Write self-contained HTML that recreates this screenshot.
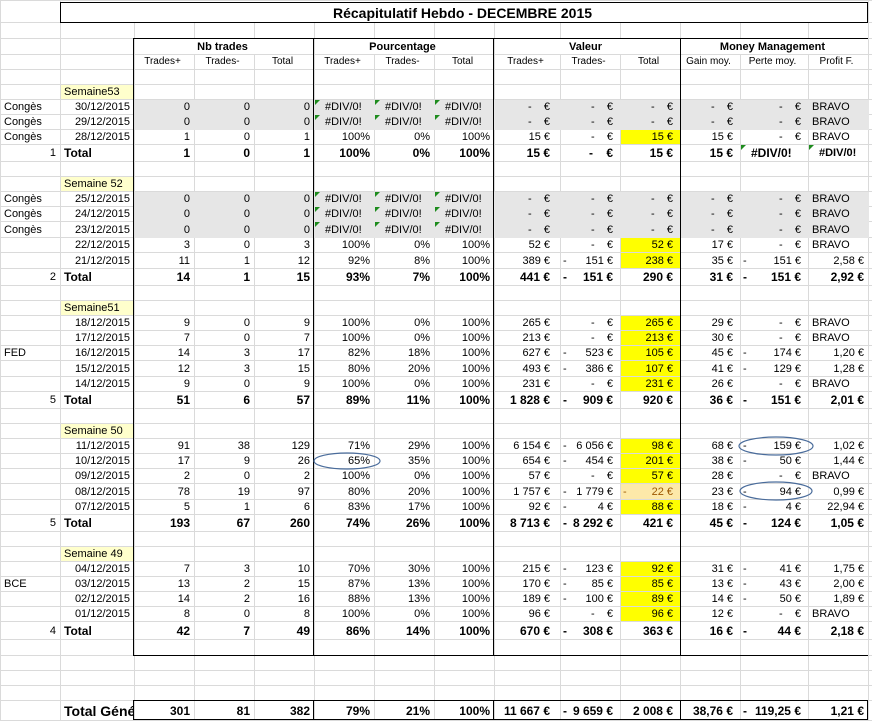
<!DOCTYPE html>
<html><head><meta charset="utf-8"><style>
body{margin:0;width:872px;height:720px;overflow:hidden;background:#fff;position:relative}
table{border-collapse:collapse;table-layout:fixed;position:absolute;left:0;top:0;width:872px}
td{border:1px solid #dadada;padding:0;text-align:right;font:11px "Liberation Sans",sans-serif;white-space:nowrap;overflow:hidden;line-height:12px;color:#000}
td::after{content:"";display:inline-block;width:4px}
td.e::after{width:7px}
td.v::after{width:10px}
td.l{text-align:left;text-indent:3px}
td.c{text-align:center}
td.g{background:#e6e6e6;border-color:#e6e6e6}
td.y{background:#ffff00}
td.o{background:#fde9a9;color:#9c5700}
td.s{background:#ffffcc;text-align:left;text-indent:3px}
td.b{font-weight:bold;font-size:12px}
td.h{font-weight:bold;text-align:center}
td.sh{text-align:center;font-size:10px}
td.d{text-align:left;text-indent:10px;position:relative}
td.d:before{content:"";position:absolute;left:0;top:0;border-top:5px solid #1e8c1e;border-right:5px solid transparent}
i{float:left;font-style:normal;padding-left:2px}
.ln{position:absolute;background:#000}
</style></head><body>
<table>
<colgroup><col style="width:60px"><col style="width:74px"><col style="width:60px"><col style="width:60px"><col style="width:60px"><col style="width:60px"><col style="width:60px"><col style="width:60px"><col style="width:66px"><col style="width:60px"><col style="width:60px"><col style="width:60px"><col style="width:68px"><col style="width:60px"><col style="width:4px"></colgroup>
<tr style="height:22px"><td></td><td colspan="13" class="c" style="font-weight:bold;font-size:14px;padding-top:2px">Récapitulatif Hebdo - DECEMBRE 2015</td><td></td></tr>
<tr style="height:16px"><td></td><td></td><td></td><td></td><td></td><td></td><td></td><td></td><td></td><td></td><td></td><td></td><td></td><td></td><td></td></tr>
<tr style="height:16px"><td></td><td></td><td colspan="3" class="h">Nb trades</td><td colspan="3" class="h">Pourcentage</td><td colspan="3" class="h">Valeur</td><td colspan="3" class="h">Money Management</td><td></td></tr>
<tr style="height:15px"><td></td><td></td><td class="sh">Trades+</td><td class="sh">Trades-</td><td class="sh">Total</td><td class="sh">Trades+</td><td class="sh">Trades-</td><td class="sh">Total</td><td class="sh">Trades+</td><td class="sh">Trades-</td><td class="sh">Total</td><td class="sh">Gain moy.</td><td class="sh">Perte moy.</td><td class="sh">Profit F.</td><td></td></tr>
<tr style="height:15px"><td></td><td></td><td></td><td></td><td></td><td></td><td></td><td></td><td></td><td></td><td></td><td></td><td></td><td></td><td></td></tr>
<tr style="height:15px"><td></td><td class="s">Semaine53</td><td></td><td></td><td></td><td></td><td></td><td></td><td></td><td></td><td></td><td></td><td></td><td></td><td></td></tr>
<tr style="height:15px"><td class="l">Congès</td><td>30/12/2015</td><td class="g">0</td><td class="g">0</td><td class="g">0</td><td class="g d">#DIV/0!</td><td class="g d">#DIV/0!</td><td class="g d">#DIV/0!</td><td class="g v">-&nbsp;&nbsp;&nbsp;&nbsp;€</td><td class="g e">-&nbsp;&nbsp;&nbsp;&nbsp;€</td><td class="g e">-&nbsp;&nbsp;&nbsp;&nbsp;€</td><td class="g e">-&nbsp;&nbsp;&nbsp;&nbsp;€</td><td class="g e">-&nbsp;&nbsp;&nbsp;&nbsp;€</td><td class="g l">BRAVO</td><td></td></tr>
<tr style="height:15px"><td class="l">Congès</td><td>29/12/2015</td><td class="g">0</td><td class="g">0</td><td class="g">0</td><td class="g d">#DIV/0!</td><td class="g d">#DIV/0!</td><td class="g d">#DIV/0!</td><td class="g v">-&nbsp;&nbsp;&nbsp;&nbsp;€</td><td class="g e">-&nbsp;&nbsp;&nbsp;&nbsp;€</td><td class="g e">-&nbsp;&nbsp;&nbsp;&nbsp;€</td><td class="g e">-&nbsp;&nbsp;&nbsp;&nbsp;€</td><td class="g e">-&nbsp;&nbsp;&nbsp;&nbsp;€</td><td class="g l">BRAVO</td><td></td></tr>
<tr style="height:15px"><td class="l">Congès</td><td>28/12/2015</td><td>1</td><td>0</td><td>1</td><td>100%</td><td>0%</td><td>100%</td><td class="v">15 €</td><td class="e">-&nbsp;&nbsp;&nbsp;&nbsp;€</td><td class="e y">15 €</td><td class="e">15 €</td><td class="e">-&nbsp;&nbsp;&nbsp;&nbsp;€</td><td class="l">BRAVO</td><td></td></tr>
<tr style="height:17px"><td>1</td><td class="l b">Total</td><td class="b">1</td><td class="b">0</td><td class="b">1</td><td class="b">100%</td><td class="b">0%</td><td class="b">100%</td><td class="b v">15 €</td><td class="b e">-&nbsp;&nbsp;&nbsp;&nbsp;€</td><td class="b e">15 €</td><td class="b e">15 €</td><td class="b d c">#DIV/0!</td><td class="b d c" style="font-size:11px">#DIV/0!</td><td></td></tr>
<tr style="height:15px"><td></td><td></td><td></td><td></td><td></td><td></td><td></td><td></td><td></td><td></td><td></td><td></td><td></td><td></td><td></td></tr>
<tr style="height:15px"><td></td><td class="s">Semaine 52</td><td></td><td></td><td></td><td></td><td></td><td></td><td></td><td></td><td></td><td></td><td></td><td></td><td></td></tr>
<tr style="height:15px"><td class="l">Congès</td><td>25/12/2015</td><td class="g">0</td><td class="g">0</td><td class="g">0</td><td class="g d">#DIV/0!</td><td class="g d">#DIV/0!</td><td class="g d">#DIV/0!</td><td class="g v">-&nbsp;&nbsp;&nbsp;&nbsp;€</td><td class="g e">-&nbsp;&nbsp;&nbsp;&nbsp;€</td><td class="g e">-&nbsp;&nbsp;&nbsp;&nbsp;€</td><td class="g e">-&nbsp;&nbsp;&nbsp;&nbsp;€</td><td class="g e">-&nbsp;&nbsp;&nbsp;&nbsp;€</td><td class="g l">BRAVO</td><td></td></tr>
<tr style="height:15px"><td class="l">Congès</td><td>24/12/2015</td><td class="g">0</td><td class="g">0</td><td class="g">0</td><td class="g d">#DIV/0!</td><td class="g d">#DIV/0!</td><td class="g d">#DIV/0!</td><td class="g v">-&nbsp;&nbsp;&nbsp;&nbsp;€</td><td class="g e">-&nbsp;&nbsp;&nbsp;&nbsp;€</td><td class="g e">-&nbsp;&nbsp;&nbsp;&nbsp;€</td><td class="g e">-&nbsp;&nbsp;&nbsp;&nbsp;€</td><td class="g e">-&nbsp;&nbsp;&nbsp;&nbsp;€</td><td class="g l">BRAVO</td><td></td></tr>
<tr style="height:16px"><td class="l">Congès</td><td>23/12/2015</td><td class="g">0</td><td class="g">0</td><td class="g">0</td><td class="g d">#DIV/0!</td><td class="g d">#DIV/0!</td><td class="g d">#DIV/0!</td><td class="g v">-&nbsp;&nbsp;&nbsp;&nbsp;€</td><td class="g e">-&nbsp;&nbsp;&nbsp;&nbsp;€</td><td class="g e">-&nbsp;&nbsp;&nbsp;&nbsp;€</td><td class="g e">-&nbsp;&nbsp;&nbsp;&nbsp;€</td><td class="g e">-&nbsp;&nbsp;&nbsp;&nbsp;€</td><td class="g l">BRAVO</td><td></td></tr>
<tr style="height:15px"><td></td><td>22/12/2015</td><td>3</td><td>0</td><td>3</td><td>100%</td><td>0%</td><td>100%</td><td class="v">52 €</td><td class="e">-&nbsp;&nbsp;&nbsp;&nbsp;€</td><td class="e y">52 €</td><td class="e">17 €</td><td class="e">-&nbsp;&nbsp;&nbsp;&nbsp;€</td><td class="l">BRAVO</td><td></td></tr>
<tr style="height:16px"><td></td><td>21/12/2015</td><td>11</td><td>1</td><td>12</td><td>92%</td><td>8%</td><td>100%</td><td class="v">389 €</td><td class="e"><i>-</i>151 €</td><td class="e y">238 €</td><td class="e">35 €</td><td class="e"><i>-</i>151 €</td><td>2,58 €</td><td></td></tr>
<tr style="height:17px"><td>2</td><td class="l b">Total</td><td class="b">14</td><td class="b">1</td><td class="b">15</td><td class="b">93%</td><td class="b">7%</td><td class="b">100%</td><td class="b v">441 €</td><td class="b e"><i>-</i>151 €</td><td class="b e">290 €</td><td class="b e">31 €</td><td class="b e"><i>-</i>151 €</td><td class="b">2,92 €</td><td></td></tr>
<tr style="height:15px"><td></td><td></td><td></td><td></td><td></td><td></td><td></td><td></td><td></td><td></td><td></td><td></td><td></td><td></td><td></td></tr>
<tr style="height:15px"><td></td><td class="s">Semaine51</td><td></td><td></td><td></td><td></td><td></td><td></td><td></td><td></td><td></td><td></td><td></td><td></td><td></td></tr>
<tr style="height:15px"><td></td><td>18/12/2015</td><td>9</td><td>0</td><td>9</td><td>100%</td><td>0%</td><td>100%</td><td class="v">265 €</td><td class="e">-&nbsp;&nbsp;&nbsp;&nbsp;€</td><td class="e y">265 €</td><td class="e">29 €</td><td class="e">-&nbsp;&nbsp;&nbsp;&nbsp;€</td><td class="l">BRAVO</td><td></td></tr>
<tr style="height:15px"><td></td><td>17/12/2015</td><td>7</td><td>0</td><td>7</td><td>100%</td><td>0%</td><td>100%</td><td class="v">213 €</td><td class="e">-&nbsp;&nbsp;&nbsp;&nbsp;€</td><td class="e y">213 €</td><td class="e">30 €</td><td class="e">-&nbsp;&nbsp;&nbsp;&nbsp;€</td><td class="l">BRAVO</td><td></td></tr>
<tr style="height:15px"><td class="l">FED</td><td>16/12/2015</td><td>14</td><td>3</td><td>17</td><td>82%</td><td>18%</td><td>100%</td><td class="v">627 €</td><td class="e"><i>-</i>523 €</td><td class="e y">105 €</td><td class="e">45 €</td><td class="e"><i>-</i>174 €</td><td>1,20 €</td><td></td></tr>
<tr style="height:16px"><td></td><td>15/12/2015</td><td>12</td><td>3</td><td>15</td><td>80%</td><td>20%</td><td>100%</td><td class="v">493 €</td><td class="e"><i>-</i>386 €</td><td class="e y">107 €</td><td class="e">41 €</td><td class="e"><i>-</i>129 €</td><td>1,28 €</td><td></td></tr>
<tr style="height:15px"><td></td><td>14/12/2015</td><td>9</td><td>0</td><td>9</td><td>100%</td><td>0%</td><td>100%</td><td class="v">231 €</td><td class="e">-&nbsp;&nbsp;&nbsp;&nbsp;€</td><td class="e y">231 €</td><td class="e">26 €</td><td class="e">-&nbsp;&nbsp;&nbsp;&nbsp;€</td><td class="l">BRAVO</td><td></td></tr>
<tr style="height:17px"><td>5</td><td class="l b">Total</td><td class="b">51</td><td class="b">6</td><td class="b">57</td><td class="b">89%</td><td class="b">11%</td><td class="b">100%</td><td class="b v">1 828 €</td><td class="b e"><i>-</i>909 €</td><td class="b e">920 €</td><td class="b e">36 €</td><td class="b e"><i>-</i>151 €</td><td class="b">2,01 €</td><td></td></tr>
<tr style="height:15px"><td></td><td></td><td></td><td></td><td></td><td></td><td></td><td></td><td></td><td></td><td></td><td></td><td></td><td></td><td></td></tr>
<tr style="height:15px"><td></td><td class="s">Semaine 50</td><td></td><td></td><td></td><td></td><td></td><td></td><td></td><td></td><td></td><td></td><td></td><td></td><td></td></tr>
<tr style="height:15px"><td></td><td>11/12/2015</td><td>91</td><td>38</td><td>129</td><td>71%</td><td>29%</td><td>100%</td><td class="v">6 154 €</td><td class="e"><i>-</i>6 056 €</td><td class="e y">98 €</td><td class="e">68 €</td><td class="e"><i>-</i>159 €</td><td>1,02 €</td><td></td></tr>
<tr style="height:15px"><td></td><td>10/12/2015</td><td>17</td><td>9</td><td>26</td><td>65%</td><td>35%</td><td>100%</td><td class="v">654 €</td><td class="e"><i>-</i>454 €</td><td class="e y">201 €</td><td class="e">38 €</td><td class="e"><i>-</i>50 €</td><td>1,44 €</td><td></td></tr>
<tr style="height:15px"><td></td><td>09/12/2015</td><td>2</td><td>0</td><td>2</td><td>100%</td><td>0%</td><td>100%</td><td class="v">57 €</td><td class="e">-&nbsp;&nbsp;&nbsp;&nbsp;€</td><td class="e y">57 €</td><td class="e">28 €</td><td class="e">-&nbsp;&nbsp;&nbsp;&nbsp;€</td><td class="l">BRAVO</td><td></td></tr>
<tr style="height:16px"><td></td><td>08/12/2015</td><td>78</td><td>19</td><td>97</td><td>80%</td><td>20%</td><td>100%</td><td class="v">1 757 €</td><td class="e"><i>-</i>1 779 €</td><td class="e o"><i>-</i>22 €</td><td class="e">23 €</td><td class="e"><i>-</i>94 €</td><td>0,99 €</td><td></td></tr>
<tr style="height:15px"><td></td><td>07/12/2015</td><td>5</td><td>1</td><td>6</td><td>83%</td><td>17%</td><td>100%</td><td class="v">92 €</td><td class="e"><i>-</i>4 €</td><td class="e y">88 €</td><td class="e">18 €</td><td class="e"><i>-</i>4 €</td><td>22,94 €</td><td></td></tr>
<tr style="height:17px"><td>5</td><td class="l b">Total</td><td class="b">193</td><td class="b">67</td><td class="b">260</td><td class="b">74%</td><td class="b">26%</td><td class="b">100%</td><td class="b v">8 713 €</td><td class="b e"><i>-</i>8 292 €</td><td class="b e">421 €</td><td class="b e">45 €</td><td class="b e"><i>-</i>124 €</td><td class="b">1,05 €</td><td></td></tr>
<tr style="height:15px"><td></td><td></td><td></td><td></td><td></td><td></td><td></td><td></td><td></td><td></td><td></td><td></td><td></td><td></td><td></td></tr>
<tr style="height:15px"><td></td><td class="s">Semaine 49</td><td></td><td></td><td></td><td></td><td></td><td></td><td></td><td></td><td></td><td></td><td></td><td></td><td></td></tr>
<tr style="height:15px"><td></td><td>04/12/2015</td><td>7</td><td>3</td><td>10</td><td>70%</td><td>30%</td><td>100%</td><td class="v">215 €</td><td class="e"><i>-</i>123 €</td><td class="e y">92 €</td><td class="e">31 €</td><td class="e"><i>-</i>41 €</td><td>1,75 €</td><td></td></tr>
<tr style="height:15px"><td class="l">BCE</td><td>03/12/2015</td><td>13</td><td>2</td><td>15</td><td>87%</td><td>13%</td><td>100%</td><td class="v">170 €</td><td class="e"><i>-</i>85 €</td><td class="e y">85 €</td><td class="e">13 €</td><td class="e"><i>-</i>43 €</td><td>2,00 €</td><td></td></tr>
<tr style="height:15px"><td></td><td>02/12/2015</td><td>14</td><td>2</td><td>16</td><td>88%</td><td>13%</td><td>100%</td><td class="v">189 €</td><td class="e"><i>-</i>100 €</td><td class="e y">89 €</td><td class="e">14 €</td><td class="e"><i>-</i>50 €</td><td>1,89 €</td><td></td></tr>
<tr style="height:15px"><td></td><td>01/12/2015</td><td>8</td><td>0</td><td>8</td><td>100%</td><td>0%</td><td>100%</td><td class="v">96 €</td><td class="e">-&nbsp;&nbsp;&nbsp;&nbsp;€</td><td class="e y">96 €</td><td class="e">12 €</td><td class="e">-&nbsp;&nbsp;&nbsp;&nbsp;€</td><td class="l">BRAVO</td><td></td></tr>
<tr style="height:18px"><td>4</td><td class="l b">Total</td><td class="b">42</td><td class="b">7</td><td class="b">49</td><td class="b">86%</td><td class="b">14%</td><td class="b">100%</td><td class="b v">670 €</td><td class="b e"><i>-</i>308 €</td><td class="b e">363 €</td><td class="b e">16 €</td><td class="b e"><i>-</i>44 €</td><td class="b">2,18 €</td><td></td></tr>
<tr style="height:16px"><td></td><td></td><td></td><td></td><td></td><td></td><td></td><td></td><td></td><td></td><td></td><td></td><td></td><td></td><td></td></tr>
<tr style="height:15px"><td></td><td></td><td></td><td></td><td></td><td></td><td></td><td></td><td></td><td></td><td></td><td></td><td></td><td></td><td></td></tr>
<tr style="height:15px"><td></td><td></td><td></td><td></td><td></td><td></td><td></td><td></td><td></td><td></td><td></td><td></td><td></td><td></td><td></td></tr>
<tr style="height:15px"><td></td><td></td><td></td><td></td><td></td><td></td><td></td><td></td><td></td><td></td><td></td><td></td><td></td><td></td><td></td></tr>
<tr style="height:20px"><td></td><td class="l b" style="font-size:14px">Total Génér</td><td class="b">301</td><td class="b">81</td><td class="b">382</td><td class="b">79%</td><td class="b">21%</td><td class="b">100%</td><td class="b v">11 667 €</td><td class="b e"><i>-</i>9 659 €</td><td class="b e">2 008 €</td><td class="b e">38,76 €</td><td class="b e"><i>-</i>119,25 €</td><td class="b">1,21 €</td><td></td></tr>
</table>
<div class="ln" style="left:60px;top:2px;width:808px;height:1px"></div>
<div class="ln" style="left:60px;top:22px;width:808px;height:1px"></div>
<div class="ln" style="left:60px;top:2px;width:1px;height:21px"></div>
<div class="ln" style="left:867px;top:2px;width:1px;height:21px"></div>
<div class="ln" style="left:134px;top:38px;width:734px;height:1px"></div>
<div class="ln" style="left:134px;top:655px;width:734px;height:1px"></div>
<div class="ln" style="left:133px;top:38px;width:1px;height:618px"></div>
<div class="ln" style="left:313px;top:38px;width:1px;height:618px"></div>
<div class="ln" style="left:493px;top:38px;width:1px;height:618px"></div>
<div class="ln" style="left:680px;top:38px;width:1px;height:618px"></div>
<div class="ln" style="left:134px;top:700px;width:734px;height:1px"></div>
<div class="ln" style="left:134px;top:719px;width:734px;height:1px"></div>
<div class="ln" style="left:133px;top:700px;width:1px;height:20px"></div>
<div class="ln" style="left:313px;top:700px;width:1px;height:20px"></div>
<div class="ln" style="left:493px;top:700px;width:1px;height:20px"></div>
<div class="ln" style="left:680px;top:700px;width:1px;height:20px"></div>
<div class="ln" style="left:867px;top:700px;width:1px;height:20px"></div>
<svg style="position:absolute;left:0;top:0" width="872" height="720">
<ellipse cx="776" cy="446" rx="37" ry="9" fill="none" stroke="#4a6c9b" stroke-width="1.2"/>
<ellipse cx="347" cy="461" rx="33" ry="8" fill="none" stroke="#4a6c9b" stroke-width="1.2"/>
<ellipse cx="776" cy="491" rx="36" ry="9" fill="none" stroke="#4a6c9b" stroke-width="1.2"/>
</svg>
</body></html>
